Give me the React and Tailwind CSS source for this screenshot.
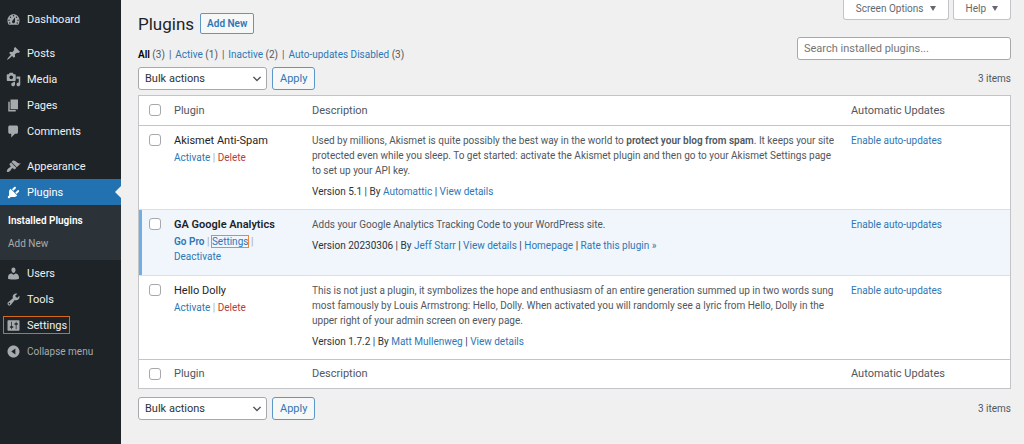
import { useState } from 'react'

// ─── Menu icons (20x20 grid) ─────────────────────────────────────────────────
const ICONS = {
  dashboard: 'M3.76 17h12.48c1.34-1.63 1.76-3.73 1.76-6 0-4.41-3.58-8-8-8s-8 3.59-8 8c0 2.27.42 4.37 1.76 6zM10 4c.55 0 1 .45 1 1s-.45 1-1 1-1-.45-1-1 .45-1 1-1zM6 6c.55 0 1 .45 1 1s-.45 1-1 1-1-.45-1-1 .45-1 1-1zM14 6c.55 0 1 .45 1 1s-.45 1-1 1-1-.45-1-1 .45-1 1-1zM8.63 11.55L12 7v6c0 1.1-.9 2-2 2s-2-.9-2-2c0-.57.24-1.08.63-1.45zM4 10c.55 0 1 .45 1 1s-.45 1-1 1-1-.45-1-1 .45-1 1-1zM16 10c.55 0 1 .45 1 1s-.45 1-1 1-1-.45-1-1 .45-1 1-1zM5 13.5c.55 0 1 .45 1 1s-.45 1-1 1-1-.45-1-1 .45-1 1-1zM15 13.5c.55 0 1 .45 1 1s-.45 1-1 1-1-.45-1-1 .45-1 1-1z',
  post: 'M10.44 3.02l1.82-1.82 6.36 6.35-1.83 1.82c-1.05-.68-2.48-.57-3.41.36l-.75.75c-.92.93-1.04 2.35-.35 3.41l-1.83 1.82-2.41-2.41-2.8 2.79c-.42.42-3.38 2.71-3.8 2.29s1.86-3.39 2.28-3.81l2.79-2.79L4.1 9.36l1.83-1.82c1.05.69 2.48.57 3.4-.36l.75-.75c.93-.92 1.05-2.35.36-3.41z',
  media: 'M13 11V4c0-.55-.45-1-1-1h-1.67L9 1H5L3.67 3H2c-.55 0-1 .45-1 1v7c0 .55.45 1 1 1h10c.55 0 1-.45 1-1zM7 4.5c1.38 0 2.5 1.12 2.5 2.5S8.38 9.5 7 9.5 4.5 8.38 4.5 7 5.62 4.5 7 4.5zM14 6h5v10.5c0 1.38-1.12 2.5-2.5 2.5S14 17.88 14 16.5s1.12-2.5 2.5-2.5c.17 0 .34.02.5.05V9h-3V6zM10 14.05V13h2v3.5c0 1.38-1.12 2.5-2.5 2.5S7 17.88 7 16.5 8.12 14 9.5 14c.17 0 .34.02.5.05z',
  page: 'M6 15V2h10v13H6zM5 16h8v2H3V5h2v11z',
  comments: 'M5 2h9c1.1 0 2 .9 2 2v7c0 1.1-.9 2-2 2h-2l-5 5v-5H5c-1.1 0-2-.9-2-2V4c0-1.1.9-2 2-2z',
  appearance: 'M14.48 11.06L7.41 3.99l1.5-1.5c.5-.56 2.3-.47 3.51.32 1.21.8 1.43 1.28 2.91 2.1 1.18.64 2.45 1.26 4.45.85zM13.77 11.77L6.7 4.7 4.93 6.47c-.39.39-.39 1.02 0 1.41l1.06 1.06c.39.39.39 1.03 0 1.42-.6.6-1.43 1.11-2.21 1.69-.35.26-.7.53-1.01.84C1.43 14.23.4 16.08 1.4 17.07c.99 1 2.84-.03 4.18-1.36.31-.31.58-.66.85-1.02.57-.78 1.08-1.61 1.69-2.21.39-.39 1.02-.39 1.41 0l1.06 1.06c.39.39 1.02.39 1.41 0z',
  plugins: 'M13.11 4.36L9.87 7.6 8 5.73l3.24-3.24c.35-.34 1.05-.2 1.56.32.52.51.66 1.21.31 1.55zM5.11 6.13l.91-1.12 9.01 9.01-1.19.84c-.71.71-2.63 1.16-3.82 1.16H6.14L4.9 17.26c-.59.59-1.54.59-2.12 0-.59-.58-.59-1.53 0-2.12l1.24-1.24v-3.88c0-1.13.4-3.19 1.09-3.89zM12.37 10.1l3.24-3.24c.34-.35 1.04-.21 1.55.31.52.51.66 1.21.31 1.55l-3.24 3.25z',
  users: 'M10 9.25c-2.27 0-2.73-3.44-2.73-3.44C7 4.02 7.82 2 9.97 2c2.16 0 2.98 2.02 2.71 3.81 0 0-.41 3.44-2.68 3.44zM10 11.82L12.72 10c2.39 0 4.52 2.33 4.52 4.53v2.49s-3.65 1.13-7.24 1.13c-3.65 0-7.24-1.13-7.24-1.13v-2.49c0-2.25 1.94-4.48 4.47-4.48z',
  tools: 'M16.68 9.77c-1.34 1.34-3.3 1.67-4.95.99l-5.41 6.52c-.99.99-2.59.99-3.58 0s-.99-2.59 0-3.57l6.52-5.42c-.68-1.65-.35-3.61.99-4.95 1.28-1.28 3.12-1.62 4.72-1.06l-2.89 2.89 2.82 2.82 2.86-2.87c.53 1.58.18 3.39-1.08 4.65zM3.81 16.21c.4.39 1.04.39 1.43 0 .4-.4.4-1.04 0-1.43-.39-.4-1.03-.4-1.43 0-.39.39-.39 1.03 0 1.43z',
  settings: 'M18 16V4c0-.55-.45-1-1-1H3c-.55 0-1 .45-1 1v12c0 .55.45 1 1 1h14c.55 0 1-.45 1-1zM8 11h1c.55 0 1 .45 1 1s-.45 1-1 1H8v1.5c0 .28-.22.5-.5.5s-.5-.22-.5-.5V13H6c-.55 0-1-.45-1-1s.45-1 1-1h1V5.5c0-.28.22-.5.5-.5s.5.22.5.5V11zM13 9h-1c-.55 0-1-.45-1-1s.45-1 1-1h1V5.5c0-.28.22-.5.5-.5s.5.22.5.5V7h1c.55 0 1 .45 1 1s-.45 1-1 1h-1v5.5c0 .28-.22.5-.5.5s-.5-.22-.5-.5V9z',
  collapse: 'M10 2c4.42 0 8 3.58 8 8s-3.58 8-8 8-8-3.58-8-8 3.58-8 8-8zM12.5 14V6l-5.5 4z',
}

function MenuIcon({ name }) {
  return (
    <svg viewBox="0 0 20 20" className="size-[15px] shrink-0" fill="currentColor" fillRule="evenodd" aria-hidden="true">
      <path d={ICONS[name]} />
    </svg>
  )
}

// ─── Data ────────────────────────────────────────────────────────────────────
const MENU = [
  [{ icon: 'dashboard', label: 'Dashboard' }],
  [
    { icon: 'post', label: 'Posts' },
    { icon: 'media', label: 'Media' },
    { icon: 'page', label: 'Pages' },
    { icon: 'comments', label: 'Comments' },
  ],
  [
    { icon: 'appearance', label: 'Appearance' },
    { icon: 'plugins', label: 'Plugins', current: true, children: ['Installed Plugins', 'Add New'] },
    { icon: 'users', label: 'Users' },
    { icon: 'tools', label: 'Tools' },
    { icon: 'settings', label: 'Settings', marked: true },
  ],
]

const FILTERS = [
  { label: 'All', count: 3, current: true },
  { label: 'Active', count: 1 },
  { label: 'Inactive', count: 2 },
  { label: 'Auto-updates Disabled', count: 3 },
]

const PLUGINS = [
  {
    name: 'Akismet Anti-Spam',
    actions: [{ label: 'Activate' }, { label: 'Delete', danger: true }],
    description: (
      <>
        Used by millions, Akismet is quite possibly the best way in the world to <strong className="font-semibold">protect your blog from spam</strong>. It keeps your site protected even while you sleep. To get started: activate the Akismet plugin and then go to your Akismet Settings page to set up your API key.
      </>
    ),
    version: '5.1',
    author: 'Automattic',
    links: ['View details'],
  },
  {
    name: 'GA Google Analytics',
    active: true,
    actions: [{ label: 'Go Pro', strong: true }, { label: 'Settings', marked: true }, { label: 'Deactivate' }],
    description: 'Adds your Google Analytics Tracking Code to your WordPress site.',
    version: '20230306',
    author: 'Jeff Starr',
    links: ['View details', 'Homepage', 'Rate this plugin »'],
  },
  {
    name: 'Hello Dolly',
    actions: [{ label: 'Activate' }, { label: 'Delete', danger: true }],
    description:
      'This is not just a plugin, it symbolizes the hope and enthusiasm of an entire generation summed up in two words sung most famously by Louis Armstrong: Hello, Dolly. When activated you will randomly see a lyric from Hello, Dolly in the upper right of your admin screen on every page.',
    version: '1.7.2',
    author: 'Matt Mullenweg',
    links: ['View details'],
  },
]

// ─── Sidebar ─────────────────────────────────────────────────────────────────
function Sidebar() {
  return (
    <nav className="w-[121px] shrink-0 bg-[#1d2327] pt-1.5 text-[11px] leading-[15px] text-[#f0f0f1]">
      {MENU.map((group, i) => (
        <ul key={i} className={i === 0 ? 'mb-2' : i === 1 ? 'mb-[9px]' : ''}>
          {group.map((item) => (
            <li key={item.label}>
              <a href="#" className={`relative flex h-[26px] items-center px-[3px] ${item.current ? 'bg-[#2271b1] text-white' : ''}`}>
                <span className={`flex h-[18px] items-center gap-1.5 border px-0.5 ${item.marked ? 'border-[#d9681d]' : 'border-transparent'}`}>
                  <span className={item.current ? 'text-white' : 'text-[#a7aaad]'}>
                    <MenuIcon name={item.icon} />
                  </span>
                  {item.label}
                </span>
                {item.current && (
                  <span className="absolute top-[7px] right-0 border-y-6 border-r-6 border-y-transparent border-r-[#f0f0f1]" />
                )}
              </a>
              {item.children && (
                <ul className="bg-[#2c3338] pt-1 pb-[5px] pl-2">
                  {item.children.map((child, n) => (
                    <li key={child} className="flex h-[23px] items-center text-[10px]">
                      <a href="#" className={n === 0 ? 'font-semibold text-white' : 'text-[#a9abae]'}>{child}</a>
                    </li>
                  ))}
                </ul>
              )}
            </li>
          ))}
        </ul>
      ))}
      <button type="button" className="flex h-[26px] items-center gap-1.5 px-1.5 text-[10px] text-[#a7aaad]">
        <MenuIcon name="collapse" />
        Collapse menu
      </button>
    </nav>
  )
}

// ─── Controls ────────────────────────────────────────────────────────────────
function BulkActions({ label, className }) {
  return (
    <div className={`flex items-center gap-[5px] ${className}`}>
      <div className="relative">
        <select aria-label={label} className="h-[23px] w-[129px] appearance-none rounded-[3px] border border-[#a6a8ac] bg-white pl-1.5 text-[11px] text-[#2c3338]">
          <option>Bulk actions</option>
          <option>Activate</option>
          <option>Deactivate</option>
          <option>Delete</option>
        </select>
        <svg viewBox="0 0 20 20" className="pointer-events-none absolute top-1.5 right-1 size-3" fill="#50575e" aria-hidden="true">
          <path d="M5 6l5 5 5-5 2 1-7 7-7-7z" />
        </svg>
      </div>
      <button type="button" className="h-[23px] rounded-[3px] border border-[#5d97c7] bg-[#f6f7f7] px-[7px] text-[11px] text-[#2e77b5]">Apply</button>
      <span className="ml-auto text-[#50575e]">3 items</span>
    </div>
  )
}

function Check({ label, checked, onChange }) {
  return (
    <input
      type="checkbox"
      aria-label={label}
      checked={checked}
      onChange={onChange}
      className="block size-3 appearance-none rounded-[3px] border border-[#a6a8ac] bg-white checked:bg-[#2271b1]"
    />
  )
}

function HeadingRow({ checked, onChange, className }) {
  return (
    <tr className={`text-[11px] ${className}`}>
      <td className="py-2 pl-2.5"><Check label="Select all" checked={checked} onChange={onChange} /></td>
      <th scope="col" className="py-1.5 text-left font-normal">Plugin</th>
      <th scope="col" className="py-1.5 text-left font-normal">Description</th>
      <th scope="col" className="py-1.5 text-left font-normal">Automatic Updates</th>
    </tr>
  )
}

function PluginRow({ plugin, checked, onChange }) {
  return (
    <tr className={`align-top ${plugin.active ? 'border-y border-[#dcdfe4] bg-[#f0f6fc]' : 'bg-white'}`}>
      <td className={`pt-2 pl-2.5 ${plugin.active ? 'shadow-[inset_3px_0_0_#72aee6]' : ''}`}>
        <Check label={`Select ${plugin.name}`} checked={checked} onChange={onChange} />
      </td>
      <td className="pt-[7px] pb-[11px]">
        <p className={`mb-0.5 text-[11px] text-[#1d2327] ${plugin.active ? 'font-semibold' : ''}`}>{plugin.name}</p>
        <p className="w-[90px] text-[#a7aaad]">
          {plugin.actions.map((action, i) => (
            <span key={action.label}>
              {i > 0 && ' | '}
              <a
                href="#"
                className={`${action.danger ? 'text-[#b83c3d]' : 'text-[#2e77b5]'} ${action.strong ? 'font-semibold' : ''} ${action.marked ? 'outline outline-[#f0863c]' : ''}`}
              >
                {action.label}
              </a>
            </span>
          ))}
        </p>
      </td>
      <td className="pt-[7px] pr-[13px] pb-[10px]">
        <p>{plugin.description}</p>
        <p className="mt-1.5 text-[#2c3338]">
          Version {plugin.version} | By <a href="#" className="text-[#2e77b5]">{plugin.author}</a>
          {plugin.links.map((link) => (
            <span key={link}> | <a href="#" className="text-[#2e77b5]">{link}</a></span>
          ))}
        </p>
      </td>
      <td className="pt-[7px]"><a href="#" className="text-[#2e77b5]">Enable auto-updates</a></td>
    </tr>
  )
}

// ─── Page ────────────────────────────────────────────────────────────────────
export default function App() {
  const [selected, setSelected] = useState([])
  const allSelected = selected.length === PLUGINS.length

  const toggle = (name) =>
    setSelected((prev) => (prev.includes(name) ? prev.filter((n) => n !== name) : [...prev, name]))
  const toggleAll = () => setSelected(allSelected ? [] : PLUGINS.map((p) => p.name))

  return (
    <div className="flex min-h-screen bg-[#f0f0f1] font-['Roboto','Open_Sans',sans-serif] text-[10px] leading-[15px] text-[#50575e]">
      <Sidebar />

      <main className="min-w-0 flex-1 pr-[13px] pl-[17px]">
        {/* Title + screen tabs */}
        <header className="flex h-[37px] items-start">
          <h1 className="pt-3 text-[17px] leading-6 text-[#1d2327]">Plugins</h1>
          <a href="#" className="mt-[13px] ml-1.5 rounded-xs border border-[#5d97c7] bg-[#f6f7f7] px-1.5 py-0.5 font-semibold text-[#2e77b5]">Add New</a>
          <div className="ml-auto flex gap-1 text-[#646970]">
            {['Screen Options', 'Help'].map((tab) => (
              <button key={tab} type="button" className="flex h-5 items-center gap-1.5 rounded-b-[3px] border border-t-0 border-[#c3c4c7] bg-white px-3 pb-0.5">
                {tab}
                <span className="border-x-3 border-t-5 border-x-transparent border-t-[#646970]" />
              </button>
            ))}
          </div>
        </header>

        {/* Filters + search */}
        <div className="flex h-[25px] items-start justify-between">
          <ul className="flex self-end">
            {FILTERS.map((f, i) => (
              <li key={f.label}>
                {i > 0 && <span className="mx-1">|</span>}
                <a href="#" className={f.current ? 'font-semibold text-black' : 'text-[#2e77b5]'}>{f.label}</a> ({f.count})
              </li>
            ))}
          </ul>
          <input
            type="search"
            aria-label="Search installed plugins"
            placeholder="Search installed plugins..."
            className="h-[23px] w-[214px] rounded-[3px] border border-[#a6a8ac] bg-white px-1.5 text-[11px] placeholder:text-[#757575]"
          />
        </div>

        <BulkActions label="Select bulk action" className="mt-[5px] mb-[5px]" />

        {/* Plugin list */}
        <div className="border border-[#c3c4c7] bg-white">
          <table className="w-full table-fixed border-collapse">
            <colgroup>
              <col className="w-[35px]" />
              <col className="w-[138px]" />
              <col />
              <col className="w-[159px]" />
            </colgroup>
            <thead>
              <HeadingRow checked={allSelected} onChange={toggleAll} className="h-[29px] border-b border-[#c3c4c7]" />
            </thead>
            <tbody>
              {PLUGINS.map((p) => (
                <PluginRow key={p.name} plugin={p} checked={selected.includes(p.name)} onChange={() => toggle(p.name)} />
              ))}
            </tbody>
            <tfoot>
              <HeadingRow checked={allSelected} onChange={toggleAll} className="border-t border-[#c3c4c7]" />
            </tfoot>
          </table>
        </div>

        <BulkActions label="Select bulk action below the list" className="mt-2" />
      </main>
    </div>
  )
}
